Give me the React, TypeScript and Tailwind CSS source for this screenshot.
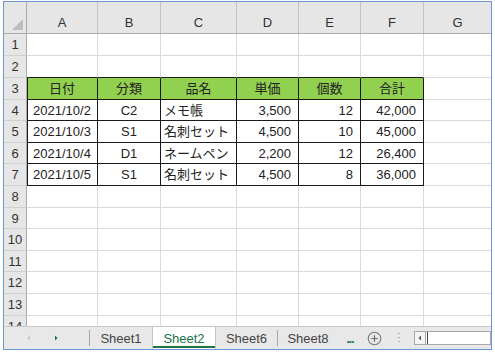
import React from 'react';

const colWidths = ['w-[71px]', 'w-[63px]', 'w-[76px]', 'w-[62px]', 'w-[62px]', 'w-[63px]'];
const colNames = ['A', 'B', 'C', 'D', 'E', 'F'];

const rowHeights = [22, 22, 22, 21, 22, 21, 22, 22, 21, 22, 21, 22, 22, 22];

type Align = 'center' | 'left' | 'right';

const tableData: { text: string; align: Align }[][] = [
  [
    { text: '日付', align: 'center' },
    { text: '分類', align: 'center' },
    { text: '品名', align: 'center' },
    { text: '単価', align: 'center' },
    { text: '個数', align: 'center' },
    { text: '合計', align: 'center' },
  ],
  [
    { text: '2021/10/2', align: 'center' },
    { text: 'C2', align: 'center' },
    { text: 'メモ帳', align: 'left' },
    { text: '3,500', align: 'right' },
    { text: '12', align: 'right' },
    { text: '42,000', align: 'right' },
  ],
  [
    { text: '2021/10/3', align: 'center' },
    { text: 'S1', align: 'center' },
    { text: '名刺セット', align: 'left' },
    { text: '4,500', align: 'right' },
    { text: '10', align: 'right' },
    { text: '45,000', align: 'right' },
  ],
  [
    { text: '2021/10/4', align: 'center' },
    { text: 'D1', align: 'center' },
    { text: 'ネームペン', align: 'left' },
    { text: '2,200', align: 'right' },
    { text: '12', align: 'right' },
    { text: '26,400', align: 'right' },
  ],
  [
    { text: '2021/10/5', align: 'center' },
    { text: 'S1', align: 'center' },
    { text: '名刺セット', align: 'left' },
    { text: '4,500', align: 'right' },
    { text: '8', align: 'right' },
    { text: '36,000', align: 'right' },
  ],
];

function alignClass(a: Align) {
  if (a === 'left') return 'justify-start pl-[3px]';
  if (a === 'right') return 'justify-end pr-[7px]';
  return 'justify-center';
}

function Row({ index }: { index: number }) {
  const row = index + 1;
  const h = rowHeights[index] === 22 ? 'h-[22px]' : 'h-[21px]';
  const inTable = row >= 3 && row <= 7;
  const data = inTable ? tableData[row - 3] : null;

  return (
    <div className={`flex shrink-0 ${h}`}>
      <div className="w-[23px] shrink-0 flex items-center justify-center bg-[#e6e6e6] border-r border-b border-r-[#ababab] border-b-[#d0d0d0] text-[13px] text-[#333]">
        {row}
      </div>
      {colWidths.map((w, c) => {
        const bottom = (row >= 2 && row <= 7) ? 'border-b-[#1a1a1a]' : 'border-b-[#dadada]';
        const right = inTable ? 'border-r-[#1a1a1a]' : 'border-r-[#dadada]';
        const left = inTable && c === 0 ? 'shadow-[inset_1px_0_0_#1a1a1a]' : '';
        const bg = row === 3 ? 'bg-[#92d050]' : 'bg-white';
        const cell = data ? data[c] : null;
        return (
          <div
            key={c}
            className={`${w} shrink-0 flex items-center border-r border-b ${bottom} ${right} ${left} ${bg} ${cell ? alignClass(cell.align) : ''} text-[13px] text-[#222] whitespace-nowrap overflow-hidden`}
          >
            {cell?.text}
          </div>
        );
      })}
      <div className="flex-1 border-b border-b-[#dadada] bg-white" />
    </div>
  );
}

function TabBar() {
  return (
    <div className="h-[23px] shrink-0 flex items-stretch bg-[#e8e8e8] border-t border-t-[#c8c8c8] text-[13px] text-[#444]">
      <div className="w-[85px] shrink-0 relative">
        <svg className="absolute left-[22px] top-[7px]" width="6" height="8" viewBox="0 0 6 8">
          <path d="M4 1.5 L1.5 4 L4 6.5 Z" fill="#c4c4c4" />
        </svg>
        <svg className="absolute left-[49px] top-[7px]" width="6" height="8" viewBox="0 0 6 8">
          <path d="M2 1.5 L4.5 4 L2 6.5 Z" fill="#1d6b3c" />
        </svg>
      </div>
      <div className="w-px shrink-0 my-[3px] bg-[#a8a8a8]" />
      <div className="w-[62px] shrink-0 flex items-center justify-center">Sheet1</div>
      <div className="w-[64px] shrink-0 flex items-center justify-center bg-white border-x border-[#c8c8c8] text-[#217346] relative">
        Sheet2
        <div className="absolute left-0 right-0 bottom-[1px] h-[2px] bg-[#217346]" />
      </div>
      <div className="w-[61px] shrink-0 flex items-center justify-center">Sheet6</div>
      <div className="w-px shrink-0 my-[3px] bg-[#a8a8a8]" />
      <div className="w-[60px] shrink-0 flex items-center justify-center">Sheet8</div>
      <div className="w-[24px] shrink-0 flex items-center justify-center">
        <span className="text-[#217346] font-bold text-[12px] tracking-[-1px] mt-[2px]">...</span>
      </div>
      <div className="w-[25px] shrink-0 flex items-center justify-center">
        <svg width="15" height="15" viewBox="0 0 15 15">
          <circle cx="7.5" cy="7.5" r="6.3" fill="none" stroke="#7a7a7a" strokeWidth="1.1" />
          <path d="M7.5 4.3 V10.7 M4.3 7.5 H10.7" stroke="#6a6a6a" strokeWidth="1.2" />
        </svg>
      </div>
      <div className="w-[24px] shrink-0 flex items-center justify-center">
        <svg width="2" height="12" viewBox="0 0 2 12">
          <rect x="0" y="1" width="2" height="1" fill="#b0b0b0" />
          <rect x="0" y="5" width="2" height="1" fill="#b0b0b0" />
          <rect x="0" y="9" width="2" height="1" fill="#b0b0b0" />
        </svg>
      </div>
      <div className="flex-1 flex items-center pl-[3px]">
        <div className="h-[14px] flex-1 flex border border-[#a8a8a8] bg-white">
          <div className="w-[11px] shrink-0 flex items-center justify-center border-r border-[#a8a8a8] bg-[#f4f4f4]">
            <svg width="4" height="6" viewBox="0 0 4 6">
              <path d="M3 0.5 L0.5 3 L3 5.5 Z" fill="#555" />
            </svg>
          </div>
          <div className="flex-1 ml-[1px] border-l border-[#444]" />
        </div>
      </div>
    </div>
  );
}

export default function App() {
  return (
    <div className="w-[495px] h-[354px] bg-white overflow-hidden font-['Liberation_Sans','Noto_Sans_CJK_JP',sans-serif] leading-[15px]">
      <div className="ml-[3px] mt-[1px] w-[489px] h-[349px] border border-[#6f95d6] flex flex-col">
        <div className="h-[324px] shrink-0 flex flex-col overflow-hidden">
          <div className="h-[32px] shrink-0 flex bg-[#e6e6e6] border-b border-b-[#ababab]">
            <div className="w-[23px] shrink-0 relative border-r border-r-[#ababab]">
              <svg className="absolute right-[3px] bottom-[3px]" width="11" height="11" viewBox="0 0 11 11">
                <path d="M11 0 L11 11 L0 11 Z" fill="#bdbdbd" />
              </svg>
            </div>
            {colNames.map((n, i) => (
              <div
                key={n}
                className={`${colWidths[i]} shrink-0 flex items-end justify-center pb-[3px] border-r border-r-[#c4c4c4] text-[13px] text-[#333]`}
              >
                {n}
              </div>
            ))}
            <div className="flex-1 flex items-end justify-center pb-[3px] text-[13px] text-[#333]">G</div>
          </div>
          {rowHeights.map((_, i) => (
            <Row key={i} index={i} />
          ))}
        </div>
        <TabBar />
      </div>
    </div>
  );
}
